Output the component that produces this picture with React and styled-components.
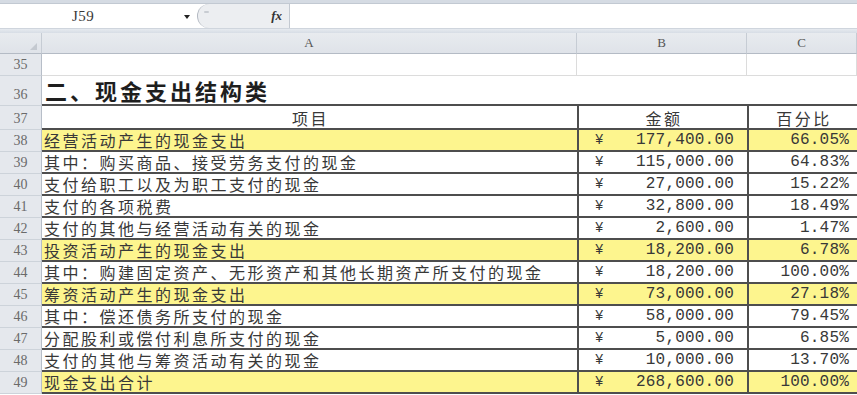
import React from 'react';
import styled, { createGlobalStyle } from 'styled-components';

const GlobalStyle = createGlobalStyle`
  html, body { margin: 0; padding: 0; background: #fff; }
  body { overflow: hidden; }
`;

const CJK = `"Noto Sans CJK SC", "Noto Sans", sans-serif`;
const MONO = `"Liberation Mono", "DejaVu Sans Mono", monospace`;
const COLS = '42px 535px 170px 110px';
const RULE = '#4e4e4e';
const YELLOW = '#fdf58e';

const Window = styled.div`
  width: 857px;
  height: 395px;
  overflow: hidden;
  display: flex;
  flex-direction: column;
  background: #fff;
`;

const TopStrip = styled.div`
  height: 4px;
  box-sizing: border-box;
  background: #d5dbe3;
  border-bottom: 1px solid #c2c9d2;
`;

const FormulaBar = styled.div`
  height: 24px;
  display: flex;
  align-items: stretch;
  background: #fff;
`;

const NameBox = styled.div`
  width: 197px;
  box-sizing: border-box;
  display: flex;
  align-items: center;
  justify-content: space-between;
  padding: 0 7px 0 72px;
  font-family: "Liberation Serif", serif;
  font-size: 15px;
  letter-spacing: 0.5px;
  color: #3a3a3a;
`;

const DropArrow = styled.span`
  width: 0;
  height: 0;
  border-left: 3px solid transparent;
  border-right: 3px solid transparent;
  border-top: 4px solid #222;
  margin-top: 1px;
`;

const ButtonGroup = styled.div`
  width: 92px;
  box-sizing: border-box;
  display: flex;
  align-items: center;
  justify-content: space-between;
  padding: 0 7px 0 6px;
  background: #eceef1;
  border-left: 1.5px solid #b3b9c2;
  border-radius: 12px 0 0 12px;
`;

const FadedDash = styled.span`
  width: 5px;
  height: 2px;
  margin-top: -8px;
  background: #c8ccd2;
  border-radius: 1px;
`;

const Fx = styled.span`
  font-family: "Liberation Serif", serif;
  font-style: italic;
  font-weight: bold;
  font-size: 13px;
  color: #333;
`;

const Divider = styled.div`
  width: 1px;
  background: #c3c9d1;
`;

const FormulaInput = styled.div`
  flex: 1;
  background: #fff;
`;

const Separator = styled.div`
  height: 5px;
  box-sizing: border-box;
  background: linear-gradient(#e6eaef, #d7dde5);
  border-top: 1px solid #cfd5dd;
`;

const HeaderRow = styled.div`
  display: grid;
  grid-template-columns: ${COLS};
  height: 21px;
`;

const HeadCell = styled.div`
  position: relative;
  box-sizing: border-box;
  display: flex;
  align-items: center;
  justify-content: center;
  background: linear-gradient(#e8ebef, #dfe3e9);
  border-right: 1px solid #c6ccd4;
  border-bottom: 1px solid #b4bbc5;
  font-family: "Liberation Serif", serif;
  font-size: 13px;
  color: #555;
`;

const Corner = styled(HeadCell)`
  &::after {
    content: '';
    position: absolute;
    right: 4px;
    bottom: 3px;
    width: 0;
    height: 0;
    border-left: 7px solid transparent;
    border-bottom: 7px solid #c4c9d0;
  }
`;

const SheetRow = styled.div`
  display: grid;
  grid-template-columns: ${COLS};
  height: ${(p) => p.$h}px;
`;

const RowNum = styled.div`
  box-sizing: border-box;
  display: flex;
  align-items: flex-end;
  justify-content: center;
  padding-bottom: 3px;
  background: #e5e8ed;
  border-right: 1px solid #b7bec8;
  border-bottom: 1px solid #cdd3da;
  font-family: "Liberation Serif", serif;
  font-size: 14px;
  line-height: 14px;
  color: #6a6a6a;
`;

const GridCell = styled.div`
  box-sizing: border-box;
  border-right: 1px solid #dcdcdc;
  border-bottom: 1px solid #dcdcdc;
`;

const TitleCell = styled.div`
  grid-column: span 3;
  box-sizing: border-box;
  display: flex;
  align-items: flex-end;
  padding: 0 0 2px 3px;
  border-bottom: 2px solid ${RULE};
  font-family: ${CJK};
  font-weight: 700;
  font-size: 22px;
  line-height: 24px;
  letter-spacing: 3px;
  color: #1e1e1e;
`;

const Cell = styled.div`
  box-sizing: border-box;
  display: flex;
  align-items: flex-end;
  justify-content: ${(p) => p.$justify || 'flex-start'};
  background: ${(p) => (p.$hl ? YELLOW : '#fff')};
  border-bottom: 2px solid ${RULE};
  border-left: ${(p) => (p.$edge ? `2px solid ${RULE}` : 'none')};
  padding: ${(p) => p.$pad || '0 0 1px 2px'};
  font-family: ${(p) => (p.$mono ? MONO : CJK)};
  font-size: 16px;
  line-height: 18px;
  letter-spacing: ${(p) => (p.$mono ? '0.2px' : '2.5px')};
  color: #383838;
  white-space: nowrap;
`;

const Yen = styled.span`
  font-family: ${MONO};
  font-size: 14px;
  letter-spacing: 0;
`;

const rows = [
  { n: 38, label: '经营活动产生的现金支出', amt: '177,400.00', pct: '66.05%', hl: true },
  { n: 39, label: '其中：购买商品、接受劳务支付的现金', amt: '115,000.00', pct: '64.83%' },
  { n: 40, label: '支付给职工以及为职工支付的现金', amt: '27,000.00', pct: '15.22%' },
  { n: 41, label: '支付的各项税费', amt: '32,800.00', pct: '18.49%' },
  { n: 42, label: '支付的其他与经营活动有关的现金', amt: '2,600.00', pct: '1.47%' },
  { n: 43, label: '投资活动产生的现金支出', amt: '18,200.00', pct: '6.78%', hl: true },
  { n: 44, label: '其中：购建固定资产、无形资产和其他长期资产所支付的现金', amt: '18,200.00', pct: '100.00%' },
  { n: 45, label: '筹资活动产生的现金支出', amt: '73,000.00', pct: '27.18%', hl: true },
  { n: 46, label: '其中：偿还债务所支付的现金', amt: '58,000.00', pct: '79.45%' },
  { n: 47, label: '分配股利或偿付利息所支付的现金', amt: '5,000.00', pct: '6.85%' },
  { n: 48, label: '支付的其他与筹资活动有关的现金', amt: '10,000.00', pct: '13.70%' },
  { n: 49, label: '现金支出合计', amt: '268,600.00', pct: '100.00%', hl: true },
];

export default function App() {
  return (
    <>
      <GlobalStyle />
      <Window>
        <TopStrip />
        <FormulaBar>
          <NameBox>
            <span>J59</span>
            <DropArrow />
          </NameBox>
          <ButtonGroup>
            <FadedDash />
            <Fx>fx</Fx>
          </ButtonGroup>
          <Divider />
          <FormulaInput />
        </FormulaBar>
        <Separator />
        <HeaderRow>
          <Corner />
          <HeadCell>A</HeadCell>
          <HeadCell>B</HeadCell>
          <HeadCell>C</HeadCell>
        </HeaderRow>
        <SheetRow $h={22}>
          <RowNum>35</RowNum>
          <GridCell />
          <GridCell />
          <GridCell />
        </SheetRow>
        <SheetRow $h={30}>
          <RowNum>36</RowNum>
          <TitleCell>二、现金支出结构类</TitleCell>
        </SheetRow>
        <SheetRow $h={24}>
          <RowNum>37</RowNum>
          <Cell $justify="center">项目</Cell>
          <Cell $justify="center" $edge>金额</Cell>
          <Cell $justify="center" $edge>百分比</Cell>
        </SheetRow>
        {rows.map((r) => (
          <SheetRow key={r.n} $h={22}>
            <RowNum>{r.n}</RowNum>
            <Cell $hl={r.hl}>{r.label}</Cell>
            <Cell $hl={r.hl} $edge $mono $justify="space-between" $pad="0 13px 1px 16px">
              <Yen>¥</Yen>
              <span>{r.amt}</span>
            </Cell>
            <Cell $hl={r.hl} $mono $justify="flex-end" $pad="0 8px 1px 0" $edge>
              {r.pct}
            </Cell>
          </SheetRow>
        ))}
      </Window>
    </>
  );
}
